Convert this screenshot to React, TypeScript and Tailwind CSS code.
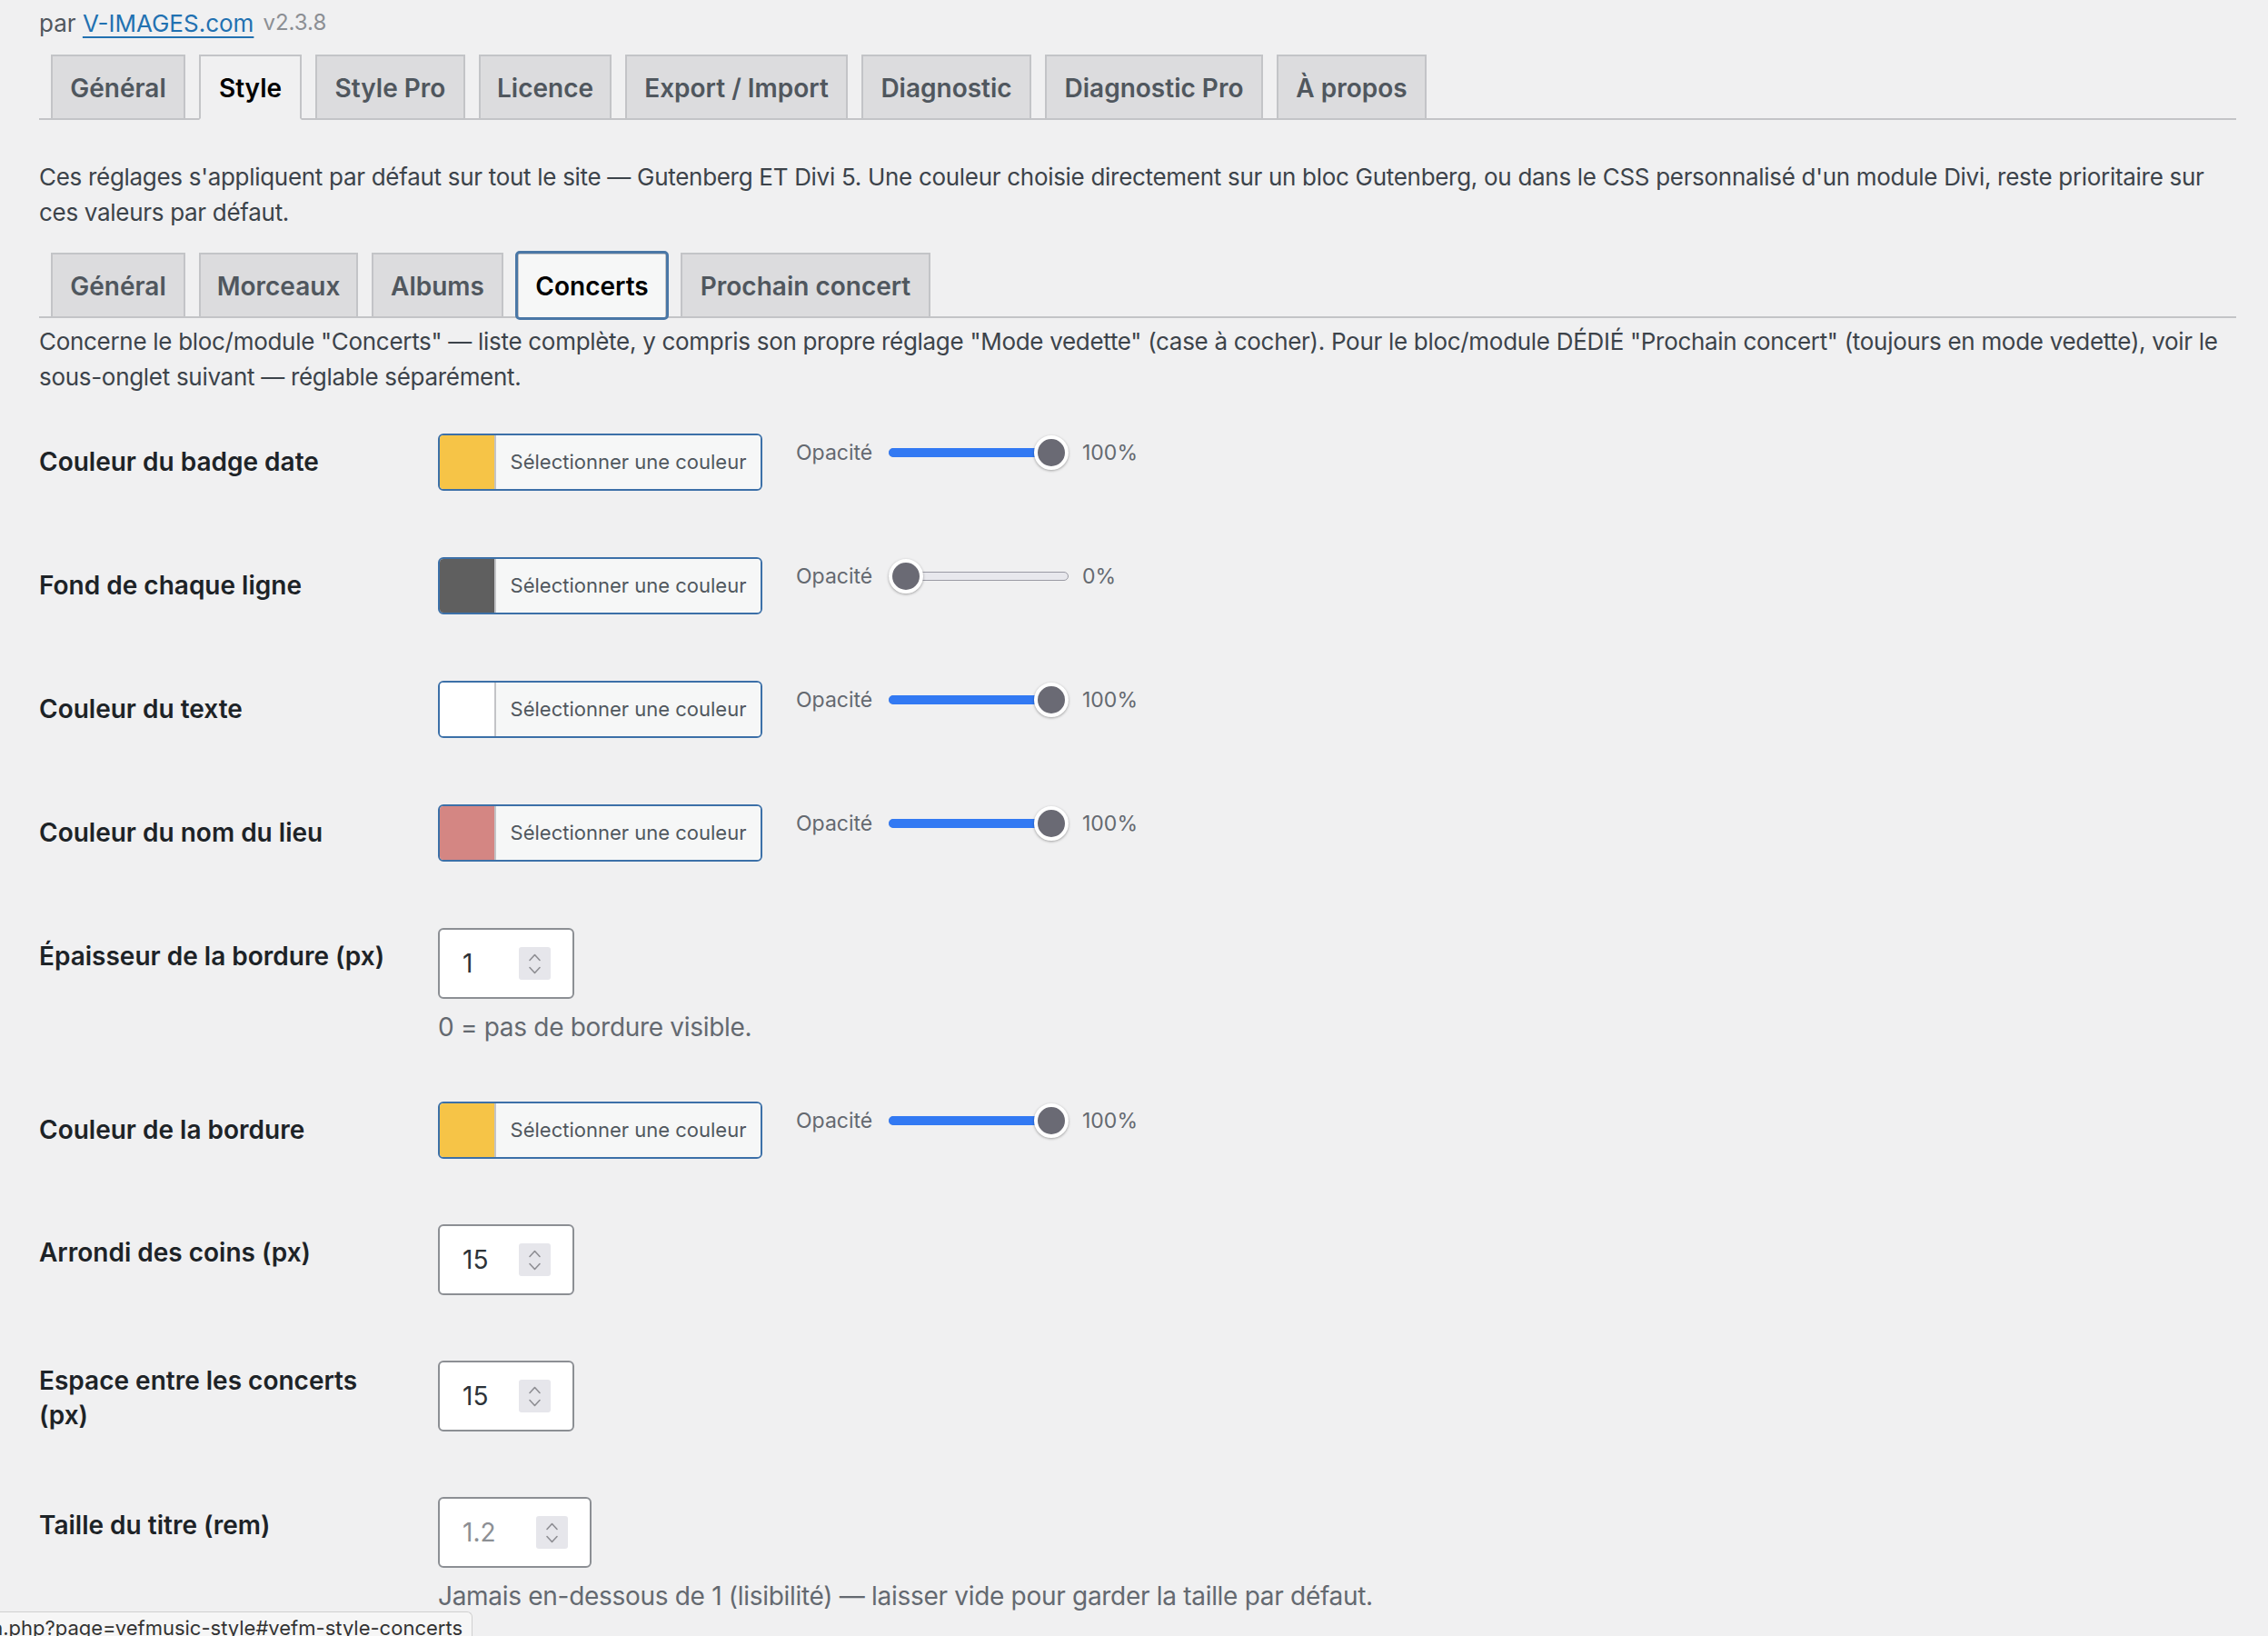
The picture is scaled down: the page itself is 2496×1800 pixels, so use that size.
import React from 'react';

type Tab = { label: string; width: number };

const MAIN_TABS: Tab[] = [
  { label: 'Général', width: 148 },
  { label: 'Style', width: 113 },
  { label: 'Style Pro', width: 165 },
  { label: 'Licence', width: 146 },
  { label: 'Export / Import', width: 245 },
  { label: 'Diagnostic', width: 187 },
  { label: 'Diagnostic Pro', width: 240 },
  { label: 'À propos', width: 165 },
];

const SUB_TABS: Tab[] = [
  { label: 'Général', width: 148 },
  { label: 'Morceaux', width: 175 },
  { label: 'Albums', width: 145 },
  { label: 'Concerts', width: 165 },
  { label: 'Prochain concert', width: 275 },
];

function NavTab({ tab, active, focused }: { tab: Tab; active?: boolean; focused?: boolean }) {
  return (
    <div
      className={
        'relative ml-[15px] first:ml-0 -mb-[2px] flex h-[72px] shrink-0 items-center justify-center border-2 pt-[2px] text-[28px] font-semibold ' +
        (active
          ? focused
            ? 'border-[#c3c4c7] border-b-[#f6f7f7] bg-[#f6f7f7] text-black'
            : 'border-[#c3c4c7] border-b-[#f0f0f1] bg-[#f0f0f1] text-black'
          : 'border-[#c3c4c7] bg-[#dcdcde] text-[#50575e]')
      }
      style={{ width: tab.width }}
    >
      {tab.label}
      {focused && (
        <span className="pointer-events-none absolute -inset-[4px] rounded-[5px] border-[3px] border-[#4a77a6]" />
      )}
    </div>
  );
}

function TabBar({ tabs, activeIndex, focused }: { tabs: Tab[]; activeIndex: number; focused?: boolean }) {
  return (
    <div className="flex h-[72px] border-b-2 border-[#c3c4c7] pl-[13px]">
      {tabs.map((t, i) => (
        <NavTab key={t.label} tab={t} active={i === activeIndex} focused={focused && i === activeIndex} />
      ))}
    </div>
  );
}

function OpacitySlider({ value }: { value: number }) {
  // knob travels 160px inside a 198px track
  const left = (value / 100) * 160;
  return (
    <div className="ml-[37px] mt-[2px] flex h-[38px] items-center text-[23px] text-[#646970]">
      <span className="w-[86px]">Opacité</span>
      <div className="relative ml-[16px] h-[38px] w-[198px]">
        <div className="absolute left-0 right-0 top-[14px] h-[10px] rounded-full border border-[#9a9aa4] bg-[#e8e8ed]" />
        {value > 0 && (
          <div
            className="absolute left-0 top-[14px] h-[10px] rounded-full bg-[#3279f3]"
            style={{ width: left + 19 }}
          />
        )}
        <div
          className="absolute top-0 h-[38px] w-[38px] rounded-full border-[4px] border-white bg-[#6a6a74] shadow-[0_1px_3px_rgba(0,0,0,0.35)]"
          style={{ left }}
        />
      </div>
      <span className="ml-[15px]">{value}%</span>
    </div>
  );
}

function ColorField({ color, opacity }: { color: string; opacity: number }) {
  return (
    <div className="flex items-start">
      <div className="flex h-[63px] w-[357px] overflow-hidden rounded-[6px] border-2 border-[#3c70a8]">
        <div className="w-[60px] shrink-0" style={{ backgroundColor: color }} />
        <div className="flex flex-1 items-center justify-center border-l-2 border-[#c3c4c7] bg-[#f6f7f7] text-[22px] text-[#50575e]">
          Sélectionner une couleur
        </div>
      </div>
      <OpacitySlider value={opacity} />
    </div>
  );
}

function Spinner() {
  return (
    <div className="h-[36px] w-[35px] rounded-[3px] bg-[#e6e6eb]">
      <svg width="35" height="36" viewBox="0 0 35 36" fill="none" stroke="#8e8e93" strokeWidth="1.6" strokeLinecap="round" strokeLinejoin="round">
        <path d="M12 14.5 17.5 8.5 23 14.5" />
        <path d="M12 22.5 17.5 28.5 23 22.5" />
      </svg>
    </div>
  );
}

function NumberField({ value, width = 150, placeholder }: { value: string; width?: number; placeholder?: boolean }) {
  return (
    <div
      className="flex h-[78px] items-center rounded-[6px] border-2 border-[#8c8f94] bg-white pl-[25px] pr-[24px]"
      style={{ width }}
    >
      <span className={'text-[28px] ' + (placeholder ? 'text-[#8c8f94]' : 'text-[#2c3338]')}>{value}</span>
      <div className="ml-auto">
        <Spinner />
      </div>
    </div>
  );
}

function Row({
  label,
  height,
  labelTop = 12,
  children,
}: {
  label: string;
  height: number;
  labelTop?: number;
  children: React.ReactNode;
}) {
  return (
    <div className="flex shrink-0 pt-[36px]" style={{ height }}>
      <div
        className="mr-[39px] w-[400px] shrink-0 text-[28px] font-semibold leading-[38px] text-[#1d2327]"
        style={{ paddingTop: labelTop }}
      >
        {label}
      </div>
      <div>{children}</div>
    </div>
  );
}

function Help({ children }: { children: React.ReactNode }) {
  return <p className="mt-[17px] text-[28px] leading-[28px] tracking-[-0.3px] text-[#646970]">{children}</p>;
}

export default function App() {
  return (
    <div className="relative h-[1800px] w-[2496px] overflow-hidden bg-[#f0f0f1] pl-[43px] pr-[35px] font-['Inter','Noto_Sans',sans-serif] text-[#3c434a]">
      <div className="mt-[8px] flex h-[34px] items-center gap-[10px] text-[26px]">
        <span className="text-[#50575e]">
          par <span className="text-[#2271b1] underline underline-offset-[5px]">V-IMAGES.com</span>
        </span>
        <span className="text-[24px] text-[#8c8f94]">v2.3.8</span>
      </div>

      <div className="mt-[18px]">
        <TabBar tabs={MAIN_TABS} activeIndex={1} />
      </div>

      <p className="mt-[43px] text-[26px] leading-[39px] tracking-[-0.3px]">
        Ces réglages s'appliquent par défaut sur tout le site — Gutenberg ET Divi 5. Une couleur choisie directement sur un bloc
        Gutenberg, ou dans le CSS personnalisé d'un module Divi, reste prioritaire sur ces valeurs par défaut.
      </p>

      <div className="mt-[25px]">
        <TabBar tabs={SUB_TABS} activeIndex={3} focused />
      </div>

      <p className="mt-[6px] text-[26px] leading-[39px] tracking-[-0.3px]">
        Concerne le bloc/module "Concerts" — liste complète, y compris son propre réglage "Mode vedette" (case à cocher). Pour le
        bloc/module DÉDIÉ "Prochain concert" (toujours en mode vedette), voir le sous-onglet suivant — réglable séparément.
      </p>

      <div className="mt-[7px] flex flex-col">
        <Row label="Couleur du badge date" height={136}>
          <ColorField color="#f6c447" opacity={100} />
        </Row>
        <Row label="Fond de chaque ligne" height={136}>
          <ColorField color="#5f5f5f" opacity={0} />
        </Row>
        <Row label="Couleur du texte" height={136}>
          <ColorField color="#ffffff" opacity={100} />
        </Row>
        <Row label="Couleur du nom du lieu" height={136}>
          <ColorField color="#d48683" opacity={100} />
        </Row>
        <Row label="Épaisseur de la bordure (px)" height={191}>
          <NumberField value="1" />
          <Help>0 = pas de bordure visible.</Help>
        </Row>
        <Row label="Couleur de la bordure" height={135}>
          <ColorField color="#f6c447" opacity={100} />
        </Row>
        <Row label="Arrondi des coins (px)" height={150}>
          <NumberField value="15" />
        </Row>
        <Row label="Espace entre les concerts (px)" height={150} labelTop={3}>
          <NumberField value="15" />
        </Row>
        <Row label="Taille du titre (rem)" height={200}>
          <NumberField value="1.2" width={169} placeholder />
          <Help>Jamais en-dessous de 1 (lisibilité) — laisser vide pour garder la taille par défaut.</Help>
        </Row>
      </div>

      <div className="absolute bottom-0 left-0 flex h-[27px] w-[520px] justify-end overflow-hidden rounded-tr-[6px] border-r border-t border-[#d0d0d0] bg-[#f6f6f6] pr-[10px] pt-[2px] text-[22px] leading-[30px] text-[#333333] whitespace-nowrap">
        admin.php?page=vefmusic-style#vefm-style-concerts
      </div>
    </div>
  );
}
